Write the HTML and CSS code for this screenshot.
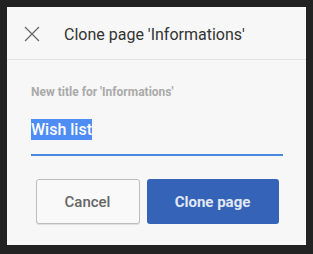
FILE: index.html
```html
<!DOCTYPE html>
<html lang="en">
<head>
  <meta charset="UTF-8">
  <title>Clone page</title>
  <link rel="stylesheet" href="styles.css">
</head>
<body>
  <div class="dialog">
    <div class="dialog-header">
      <button class="btn-close" aria-label="Close">
        <svg width="16" height="16" viewBox="0 0 16 16"><path d="M1 1L15 15M15 1L1 15" stroke="#666" stroke-width="1.2" fill="none"/></svg>
      </button>
      <h1>Clone page 'Informations'</h1>
    </div>
    <div class="dialog-body">
      <label class="field-label">New title for 'Informations'</label>
      <div class="field-input"><span class="selected">Wish list</span></div>
      <div class="actions">
        <button class="btn btn-cancel">Cancel</button>
        <button class="btn btn-primary">Clone page</button>
      </div>
    </div>
  </div>
</body>
</html>
```

FILE: styles.css
```css
* { margin: 0; padding: 0; box-sizing: border-box; font-family: Roboto, 'Liberation Sans', sans-serif; }
body { background: #222; width: 313px; height: 254px; padding: 7px 7px 0 7px; }
.dialog { background: #f7f7f7; width: 299px; height: 238px; }
.dialog-header { height: 53px; display: flex; align-items: center; border-bottom: 1px solid #e2e2e2; padding-left: 17px; }
.btn-close { background: none; border: none; width: 16px; height: 16px; margin-top: 2px; margin-right: 24px; display: flex; }
.dialog-header h1 { font-size: 16px; font-weight: 400; color: #333; margin-top: 2px; }
.dialog-body { padding: 25px 23px 0 24px; }
.field-label { display: block; font-size: 12px; font-weight: 700; color: #aaa; height: 14px; }
.field-input { margin-top: 20px; height: 37px; border-bottom: 2px solid #4a88e0; font-size: 16px; font-weight: 500; }
.selected { background: #4e8cf6; color: #fff; display: inline-block; line-height: 21px; }
.actions { display: flex; justify-content: center; gap: 7px; margin-top: 23px; }
.btn { height: 45px; border-radius: 3px; font-size: 15px; cursor: pointer; }
.btn-cancel { width: 104px; background: #f9f9f9; border: 1px solid #bdbdbd; color: #666; box-shadow: 0 1px 1px rgba(0,0,0,0.1); font-weight: 500; }
.btn-primary { width: 132px; background: #3563b8; border: none; color: #e2e8f4; font-weight: 700; }
```
